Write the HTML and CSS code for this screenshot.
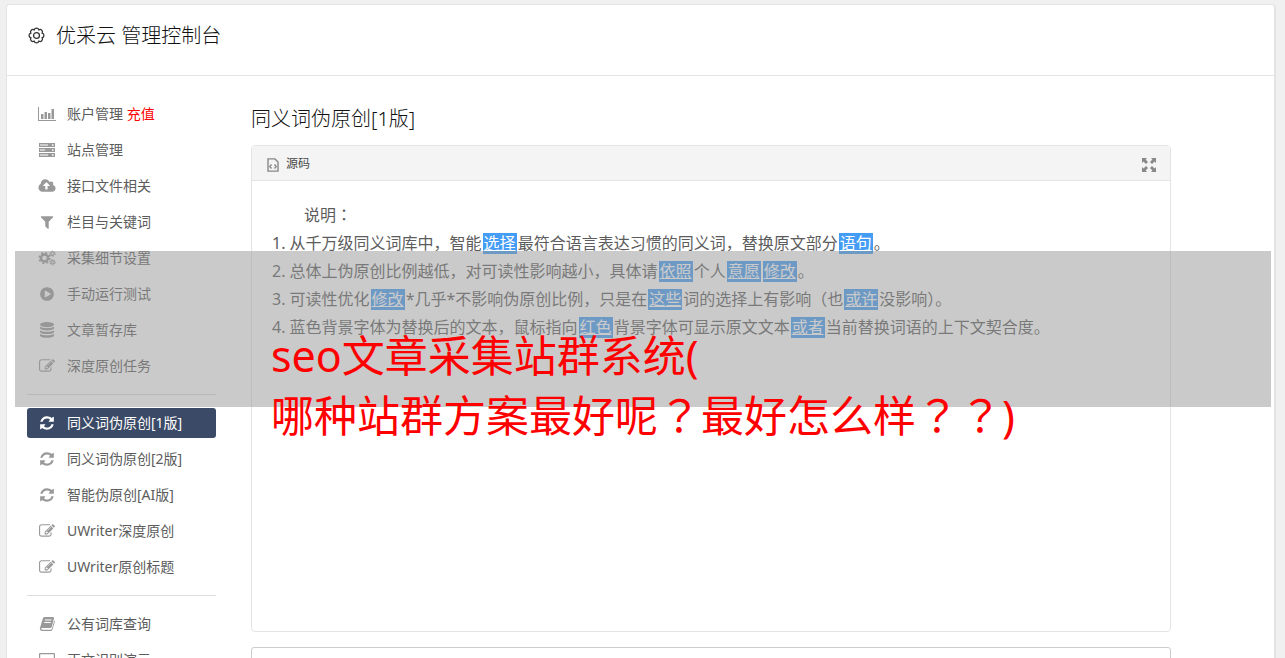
FILE: index.html
```
<!DOCTYPE html>
<html lang="zh-CN">
<head>
  <meta charset="UTF-8">
  <meta name="viewport" content="width=device-width, initial-scale=1">
  <title>优采云 管理控制台</title>
  <link rel="stylesheet" href="styles.css">
</head>
<body>
  <!-- 图标 -->
  <svg class="sprite" aria-hidden="true">
    <symbol id="i-chart" viewBox="0 0 18 16">
      <path d="M0 1h1v13h17v1H0zM3 8h2.500v5H3zM6.500 6H9v7H6.500zM10 7h2.500v6H10zM13.500 3H16v10h-2.500z"/>
    </symbol>
    <symbol id="i-server" viewBox="0 0 18 16">
      <path fill-rule="evenodd" d="M1 1h16v4H1zM2 2.500v1h8v-1zM14 2.200v1.500h1.500V2.200zM1 6h16v4H1zM2 7.500v1h5v-1zM14 7.200v1.500h1.500V7.200zM1 11h16v4H1zM2 12.500v1h8v-1zM14 12.200v1.500h1.500v-1.500z"/>
    </symbol>
    <symbol id="i-cloud" viewBox="0 0 1920 1792">
      <path d="M1280 864q0-14-9-23l-352-352q-9-9-23-9t-23 9l-351 351q-10 12-10 24 0 14 9 23t23 9h224v352q0 13 9.500 22.500t22.500 9.500h192q13 0 22.500-9.500t9.500-22.500v-352h224q13 0 22.500-9.500t9.500-22.500zm640 288q0 159-112.500 271.500t-271.500 112.500h-1088q-185 0-316.500-131.500t-131.500-316.500q0-130 70-240t188-165q-2-30-2-43 0-212 150-362t362-150q156 0 285.500 87t188.500 231q71-62 166-62 106 0 181 75t75 181q0 76-41 138 130 31 213.500 135.500t83.500 238.500z"/>
    </symbol>
    <symbol id="i-filter" viewBox="0 0 1792 1792">
      <path d="M1595 295q17 41-14 70l-493 493v742q0 42-39 59-13 5-25 5-27 0-45-19l-256-256q-19-19-19-45v-486l-493-493q-31-29-14-70 17-39 59-39h1280q42 0 59 39z"/>
    </symbol>
    <symbol id="i-cogs" viewBox="0 0 18 16">
      <g fill="none" stroke="currentColor">
        <circle cx="6.500" cy="8" r="3.500" stroke-width="2.400"/>
        <circle cx="6.500" cy="8" r="5.300" stroke-width="1.600" stroke-dasharray="2.100 2.060"/>
        <circle cx="14.500" cy="3.700" r="1.700" stroke-width="1.200"/>
        <circle cx="14.500" cy="3.700" r="2.700" stroke-width="1" stroke-dasharray="1.400 1.430"/>
        <circle cx="14.500" cy="12.300" r="1.700" stroke-width="1.200"/>
        <circle cx="14.500" cy="12.300" r="2.700" stroke-width="1" stroke-dasharray="1.400 1.430"/>
      </g>
    </symbol>
    <symbol id="i-play" viewBox="0 0 1792 1792">
      <path d="M896 128q209 0 385.500 103t279.500 279.500 103 385.500-103 385.500-279.500 279.500-385.500 103-385.500-103-279.500-279.500-103-385.500 103-385.500 279.500-279.500 385.500-103zm384 823q32-18 32-55t-32-55l-544-320q-31-19-64-1-32 19-32 56v640q0 37 32 56 16 8 32 8 17 0 32-9z"/>
    </symbol>
    <symbol id="i-database" viewBox="0 0 16 16">
      <ellipse cx="8" cy="2.600" rx="7" ry="2.600"/>
      <path d="M1 4.600c2 2 12 2 14 0v2c-1 2.500-13 2.500-14 0zM1 8.200c2 2 12 2 14 0v2c-1 2.500-13 2.500-14 0zM1 11.800c2 2 12 2 14 0v2c-1 2.700-13 2.700-14 0z"/>
    </symbol>
    <symbol id="i-edit" viewBox="0 0 1792 1792">
      <path d="M888 1184l116-116-152-152-116 116v56h96v96h56zm440-720q-16-16-33 1l-350 350q-17 17-1 33t33-1l350-350q17-17 1-33zm80 594v190q0 119-84.500 203.500t-203.500 84.500h-832q-119 0-203.500-84.500t-84.500-203.500v-832q0-119 84.500-203.500t203.500-84.500h832q63 0 117 25 15 7 18 23 3 17-9 29l-49 49q-14 14-32 8-23-6-45-6h-832q-66 0-113 47t-47 113v832q0 66 47 113t113 47h832q66 0 113-47t47-113v-126q0-13 9-22l64-64q15-15 35-7t20 29zm-96-738l288 288-672 672h-288v-288zm444 132l-92 92-288-288 92-92q28-28 68-28t68 28l152 152q28 28 28 68t-28 68z"/>
    </symbol>
    <symbol id="i-refresh" viewBox="0 0 1792 1792">
      <path d="M1639 1056q0 5-1 7-64 268-268 434.500t-478 166.500q-146 0-282.500-55t-243.500-157l-129 129q-19 19-45 19t-45-19-19-45v-448q0-26 19-45t45-19h448q26 0 45 19t19 45-19 45l-137 137q71 66 161 102t187 36q134 0 250-65t186-179q11-17 53-117 8-23 30-23h192q13 0 22.500 9.500t9.500 22.500zm25-800v448q0 26-19 45t-45 19h-448q-26 0-45-19t-19-45 19-45l138-138q-148-137-349-137-134 0-250 65t-186 179q-11 17-53 117-8 23-30 23h-199q-13 0-22.500-9.500t-9.500-22.500v-7q65-268 270-434.500t480-166.500q146 0 284 55.500t245 156.500l130-129q19-19 45-19t45 19 19 45z"/>
    </symbol>
    <symbol id="i-book" viewBox="0 0 16 16">
      <path fill-rule="evenodd" d="M5.500 1H14q1.200.200 1 1.500L12.700 11q-.400 1-1.500 1H3q-1 .200-.700 1 .300.700 1.300.700h8.200q.700 0 1-.700L15.300 4.500q.700.500.500 1.300l-2.400 8q-.500 1.200-1.700 1.200H3.200Q1 15 .800 12.500L3.800 2.500Q4.300 1.200 5.500 1zM6 3.500l-.300 1h6.600l.300-1zM5.400 6l-.300 1h6.500l.300-1z"/>
    </symbol>
    <symbol id="i-laptop" viewBox="0 0 18 16">
      <path fill-rule="evenodd" d="M2 1h14q1 0 1 1v9q0 1-1 1H2q-1 0-1-1V2q0-1 1-1zM2.200 2.200v8.600h13.600V2.200zM0 13h18v1q-.500 1-2 1H2q-1.500 0-2-1z"/>
    </symbol>
  </svg>

  <div class="wrapper">
    <header class="top">
      <svg class="gear" viewBox="0 0 18 18" aria-hidden="true">
        <path d="M14.360 6.780A2.300 2.300 0 0 1 14.360 11.220A2.300 2.300 0 0 1 11.220 14.360A2.300 2.300 0 0 1 6.780 14.360A2.300 2.300 0 0 1 3.640 11.220A2.300 2.300 0 0 1 3.640 6.780A2.300 2.300 0 0 1 6.780 3.640A2.300 2.300 0 0 1 11.220 3.640A2.300 2.300 0 0 1 14.360 6.780Z"/>
        <circle cx="9" cy="9" r="2.800"/>
      </svg>
      <h1>优采云 管理控制台</h1>
    </header>

    <div class="layout">
      <nav class="sidebar">
        <a href="#"><svg><use href="#i-chart"/></svg><span>账户管理 <em>充值</em></span></a>
        <a href="#"><svg><use href="#i-server"/></svg>站点管理</a>
        <a href="#"><svg><use href="#i-cloud"/></svg>接口文件相关</a>
        <a href="#"><svg><use href="#i-filter"/></svg>栏目与关键词</a>
        <a href="#"><svg><use href="#i-cogs"/></svg>采集细节设置</a>
        <a href="#"><svg><use href="#i-play"/></svg>手动运行测试</a>
        <a href="#"><svg><use href="#i-database"/></svg>文章暂存库</a>
        <a href="#"><svg><use href="#i-edit"/></svg>深度原创任务</a>
        <hr>
        <a href="#" class="active"><svg><use href="#i-refresh"/></svg>同义词伪原创[1版]</a>
        <a href="#"><svg><use href="#i-refresh"/></svg>同义词伪原创[2版]</a>
        <a href="#"><svg><use href="#i-refresh"/></svg>智能伪原创[AI版]</a>
        <a href="#"><svg><use href="#i-edit"/></svg>UWriter深度原创</a>
        <a href="#"><svg><use href="#i-edit"/></svg>UWriter原创标题</a>
        <hr>
        <a href="#"><svg><use href="#i-book"/></svg>公有词库查询</a>
        <a href="#"><svg><use href="#i-laptop"/></svg>正文识别演示</a>
      </nav>

      <main class="content">
        <h2>同义词伪原创[1版]</h2>

        <section class="editor">
          <div class="toolbar">
            <button type="button" class="source">
              <svg viewBox="0 0 12 14" aria-hidden="true">
                <path d="M1 .900h7L11 4v9.100H1zM4.500 6.500L2.800 8.500l1.700 2M7.500 6.500l1.700 2-1.700 2"/>
              </svg>
              源码
            </button>
            <button type="button" class="maximize" aria-label="最大化">
              <svg viewBox="0 0 14 14" aria-hidden="true">
                <path d="M0 0h5L3.600 1.500 6 4 4 6 1.500 3.600 0 5zM14 0v5l-1.500-1.400L10 6 8 4l2.400-2.500L9 0zM0 14V9l1.500 1.400L4 8l2 2-2.400 2.500L5 14zM14 14H9l1.400-1.500L8 10l2-2 2.500 2.400L14 9z"/>
              </svg>
            </button>
          </div>
          <div class="article">
            <p class="indent">说明<span class="mid" lang="zh-Hant">：</span></p>
            <p>1. 从千万级同义词库中，智能<mark>选择</mark>最符合语言表达习惯的同义词，替换原文部分<mark>语句</mark>。</p>
            <p>2. 总体上伪原创比例越低，对可读性影响越小，具体请<mark>依照</mark>个人<mark>意愿</mark><mark>修改</mark>。</p>
            <p>3. 可读性优化<mark>修改</mark>*几乎*不影响伪原创比例，只是在<mark>这些</mark>词的选择上有影响（也<mark>或许</mark>没影响）。</p>
            <p>4. 蓝色背景字体为替换后的文本，鼠标指向<mark>红色</mark>背景字体可显示原文文本<mark>或者</mark>当前替换词语的上下文契合度。</p>
          </div>
        </section>

        <section class="result"></section>
      </main>
    </div>

    <!-- 覆盖在页面上的标题横幅 -->
    <div class="banner">
      <p>seo文章采集站群系统(<br>哪种站群方案最好呢<span class="mid" lang="zh-Hant">？</span>最好怎么样<span class="mid" lang="zh-Hant">？？</span>)</p>
    </div>
  </div>
</body>
</html>
```

FILE: styles.css
```
*, *::before, *::after {
  box-sizing: border-box;
}

body {
  margin: 0;
  padding: 4px 9px 0 6px;
  height: 100vh;
  overflow: hidden;
  background-color: #f0f0f0;
  color: #5c5c5c;
  font-family: "Noto Sans", "Noto Sans CJK SC", sans-serif;
  font-size: 14px;
}

h1, h2, p {
  margin: 0;
  font-weight: 300;
}

.sprite {
  display: none;
}

/* 居中的全角标点 */
.mid {
  font-family: "Noto Sans CJK TC", sans-serif;
  line-height: 1;
}

.wrapper {
  position: relative;
  min-height: 100vh;
  background-color: #fff;
  border: 1px solid #e4e4e4;
  border-right-width: 2px;
  border-radius: 4px;
}

/* 顶部 */
.top {
  display: flex;
  align-items: center;
  gap: 10px;
  height: 71px;
  padding: 0 20px 8px;
  border-bottom: 1px solid #e4e4e4;
}

.gear {
  width: 19px;
  height: 19px;
  margin-bottom: 2px;
  fill: none;
  stroke: #333;
  stroke-width: 1.2;
}

h1, h2 {
  color: #111;
  font-size: 20px;
  line-height: 30px;
}

.layout {
  display: flex;
  align-items: flex-start;
  gap: 35px;
  padding: 23px 20px;
}

/* 左侧菜单 */
.sidebar {
  display: flex;
  flex-direction: column;
  flex: 0 0 189px;
  gap: 6px;
}

.sidebar a {
  display: flex;
  align-items: center;
  gap: 10px;
  height: 30px;
  padding: 0 0 2px 10px;
  border-radius: 3px;
  color: #5c5c5c;
  text-decoration: none;
}

.sidebar svg {
  width: 20px;
  height: 16px;
  margin-top: 2px;
  fill: #999;
  color: #999;
}

.sidebar em {
  color: #f00;
  font-style: normal;
}

.sidebar .active {
  background-color: #3b4a66;
  color: #fff;
}

.sidebar .active svg {
  fill: #fff;
}

.sidebar hr {
  width: 100%;
  margin: 7px 0;
  border: 0;
  border-top: 1px solid #ddd;
}

/* 编辑区 */
.content {
  flex: 1;
  max-width: 920px;
  padding-top: 5px;
}

.editor {
  margin-top: 11px;
  border: 1px solid #e4e4e4;
  border-radius: 4px;
}

.toolbar {
  display: flex;
  justify-content: space-between;
  align-items: center;
  height: 35px;
  padding: 0 14px 0 15px;
  background-color: #f4f4f4;
  border-bottom: 1px solid #e4e4e4;
}

.toolbar button {
  display: flex;
  align-items: center;
  gap: 7px;
  padding: 0;
  border: 0;
  background: none;
  color: #484848;
  font-family: inherit;
  font-size: 12px;
}

.toolbar svg {
  margin-top: 3px;
}

.source svg {
  width: 12px;
  height: 14px;
  fill: none;
  stroke: #888;
  stroke-width: 1.4;
}

.maximize svg {
  width: 14px;
  height: 14px;
  fill: #888;
}

.article {
  min-height: 450px;
  padding: 20px;
  font-size: 16px;
  line-height: 28px;
}

.article p {
  font-weight: 400;
}

.article .indent {
  text-indent: 2em;
}

.article mark {
  display: inline-block;
  margin: 0 1px;
  padding: 0 1px;
  background-color: #459cf5;
  color: #fff;
  line-height: 21px;
  text-decoration: underline;
}

.result {
  height: 200px;
  margin-top: 15px;
  border: 1px solid #ccc;
  border-radius: 3px;
}

/* 标题横幅 */
.banner {
  position: absolute;
  top: 246px;
  left: 8px;
  right: 3px;
  height: 156px;
  padding: 75px 0 0 256px;
  background-color: rgba(150, 150, 150, 0.5);
}

.banner p {
  color: #f00;
  font-size: 43px;
  font-weight: 400;
  line-height: 60px;
  white-space: nowrap;
}
```
